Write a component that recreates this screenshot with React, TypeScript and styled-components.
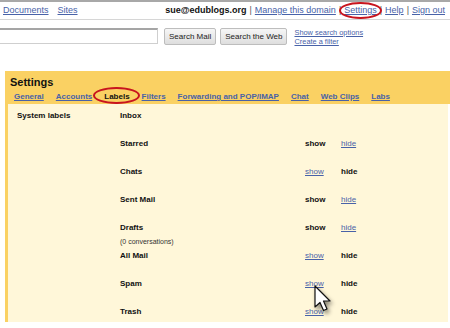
import React from 'react';
import styled, {createGlobalStyle} from 'styled-components';

const GlobalStyle = createGlobalStyle`
  body {
    margin: 0;
    background: #fff;
    font-family: "Liberation Sans", Arial, sans-serif;
    color: #222;
  }
`;

const Page = styled.div`
  position: relative;
  width: 450px;
  height: 328px;
  overflow: hidden;
`;

const TopBar = styled.div`
  display: flex;
  justify-content: space-between;
  align-items: center;
  box-sizing: border-box;
  height: 20px;
  padding: 0 5px 0 3px;
  border-top: 2px solid #a8a8a8;
  border-bottom: 1px solid #d6d6d6;
  font-size: 9px;
  line-height: 11px;
`;

const LinkGroup = styled.div`
  display: flex;
  gap: 9px;
`;

const Link = styled.a`
  color: #4862a8;
  text-decoration: underline;
  cursor: pointer;
`;

const User = styled.span`
  font-weight: bold;
  color: #111;
`;

const Sep = styled.span`
  color: #555;
  padding: 0 3px;
`;

const Ringed = styled.span`
  position: relative;
  display: inline-block;
`;

const Ring = styled.span<{$l:number, $r:number, $t:number, $b:number}>`
  position: absolute;
  left: ${p => p.$l}px;
  right: ${p => p.$r}px;
  top: ${p => p.$t}px;
  bottom: ${p => p.$b}px;
  border: 2px solid #c8141e;
  border-radius: 50%;
  pointer-events: none;
`;

const SearchRow = styled.div`
  display: flex;
  align-items: flex-start;
  margin-top: 8px;
`;

const SearchInput = styled.div`
  box-sizing: border-box;
  width: 158px;
  height: 16px;
  border: 1px solid #cfcfcf;
  border-top: 2px solid #a5a5a5;
  border-left: none;
  background: #fff;
`;

const Button = styled.button<{$ml:number}>`
  box-sizing: border-box;
  height: 17px;
  margin-left: ${p => p.$ml}px;
  padding: 0 4px;
  border: 1px solid #bdbdbd;
  border-radius: 2px;
  background: linear-gradient(#f6f6f6, #dedede);
  font-family: "Liberation Sans", Arial, sans-serif;
  font-size: 8px;
  color: #222;
`;

const SearchLinks = styled.div`
  display: flex;
  flex-direction: column;
  margin: 0 0 0 7px;
  font-size: 7.4px;
  line-height: 9px;
`;

const Panel = styled.div`
  margin: 25px 0 0 5px;
  width: 445px;
`;

const Header = styled.div`
  background: #fad163;
  padding: 4px 0 2px 5px;
`;

const Title = styled.div`
  font-size: 11px;
  line-height: 14px;
  font-weight: bold;
  color: #111;
`;

const Tabs = styled.div`
  display: flex;
  gap: 12px;
  margin-top: 3px;
  padding-left: 4px;
  font-size: 8px;
  line-height: 10px;
  font-weight: bold;
`;

const Tab = styled.a<{$active?:boolean}>`
  color: ${p => p.$active ? '#111' : '#4862a8'};
  text-decoration: ${p => p.$active ? 'none' : 'underline'};
  white-space: nowrap;
`;

const Body = styled.div`
  margin-right: 2px;
  border-left: 3px solid #fad163;
  background: #fff7d9;
`;

const Row = styled.div`
  display: grid;
  grid-template-columns: 103px 185px 36px 1fr;
  box-sizing: border-box;
  height: 28px;
  padding: 7px 0 0 9px;
  font-size: 8px;
  line-height: 10px;

  &:last-child {
    height: 22px;
  }
`;

const Strong = styled.span`
  font-weight: bold;
  color: #111;
`;

const Name = styled.div`
  display: flex;
  flex-direction: column;
  font-weight: bold;
  color: #111;
`;

const Note = styled.span`
  margin-top: 4px;
  font-size: 7px;
  line-height: 9px;
  font-weight: normal;
  color: #333;
`;

const Cursor = styled.svg`
  position: absolute;
  left: 313px;
  top: 285px;
  filter: drop-shadow(2px 3px 2px rgba(0, 0, 0, 0.45));
`;

type Label = {name:string, note?:string, shown?:boolean};

const labels:Label[] = [
    {name: 'Inbox'},
    {name: 'Starred', shown: true},
    {name: 'Chats', shown: false},
    {name: 'Sent Mail', shown: true},
    {name: 'Drafts', note: '(0 conversations)', shown: true},
    {name: 'All Mail', shown: false},
    {name: 'Spam', shown: false},
    {name: 'Trash', shown: false},
];

const tabs = ['General', 'Accounts', 'Labels', 'Filters', 'Forwarding and POP/IMAP', 'Chat', 'Web Clips', 'Labs'];

export default function App() {
    return (
        <Page>
            <GlobalStyle/>
            <TopBar>
                <LinkGroup>
                    <Link>Documents</Link>
                    <Link>Sites</Link>
                </LinkGroup>
                <div>
                    <User>sue@edublogs.org</User>
                    <Sep>|</Sep>
                    <Link>Manage this domain</Link>
                    <Sep>|</Sep>
                    <Ringed>
                        <Link>Settings</Link>
                        <Ring $l={-5} $r={-5} $t={-3} $b={-3}/>
                    </Ringed>
                    <Sep>|</Sep>
                    <Link>Help</Link>
                    <Sep>|</Sep>
                    <Link>Sign out</Link>
                </div>
            </TopBar>
            <SearchRow>
                <SearchInput/>
                <Button $ml={6}>Search Mail</Button>
                <Button $ml={4}>Search the Web</Button>
                <SearchLinks>
                    <Link>Show search options</Link>
                    <Link>Create a filter</Link>
                </SearchLinks>
            </SearchRow>
            <Panel>
                <Header>
                    <Title>Settings</Title>
                    <Tabs>
                        {tabs.map(t => t === 'Labels'
                            ? <Ringed key={t}>
                                <Tab $active>{t}</Tab>
                                <Ring $l={-11} $r={-10} $t={-5} $b={-2}/>
                            </Ringed>
                            : <Tab key={t}>{t}</Tab>)}
                    </Tabs>
                </Header>
                <Body>
                    {labels.map((l, i) =>
                        <Row key={l.name}>
                            <Strong>{i === 0 ? 'System labels' : ''}</Strong>
                            <Name>
                                {l.name}
                                {l.note && <Note>{l.note}</Note>}
                            </Name>
                            {l.shown === undefined
                                ? <><span/><span/></>
                                : <>
                                    <span>{l.shown ? <Strong>show</Strong> : <Link>show</Link>}</span>
                                    <span>{l.shown ? <Link>hide</Link> : <Strong>hide</Strong>}</span>
                                </>}
                        </Row>
                    )}
                </Body>
            </Panel>
            <Cursor width="20" height="28" viewBox="0 0 20 28">
                <path d="M2 1 L2 22 L7 17.5 L10.5 25.5 L14 24 L10.5 16 L17 16 Z"
                    fill="#fff" stroke="#111" strokeWidth="1.2" strokeLinejoin="round"/>
            </Cursor>
        </Page>
    );
}
